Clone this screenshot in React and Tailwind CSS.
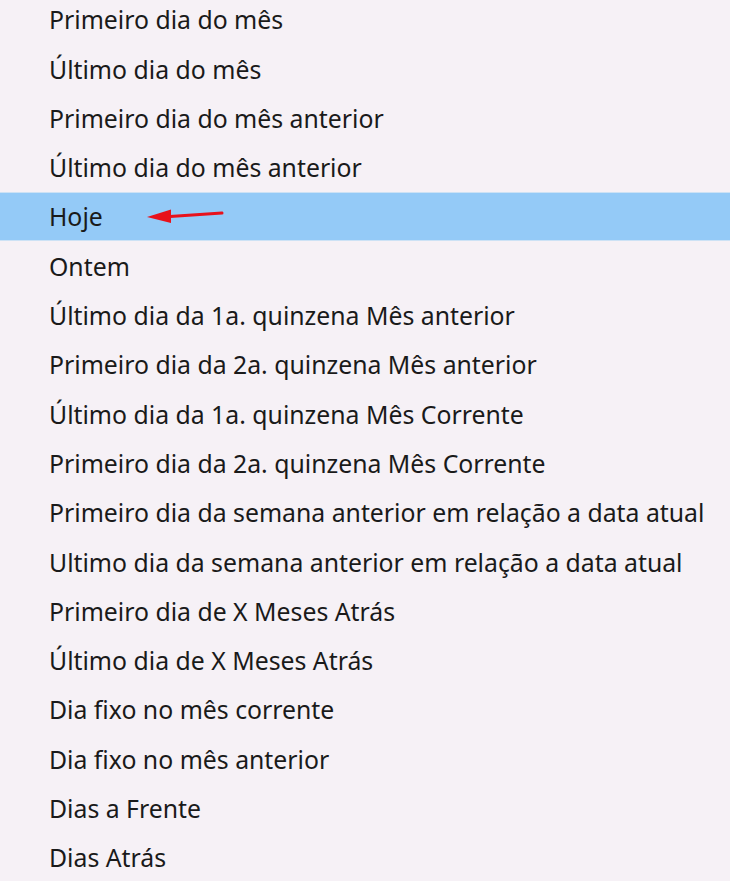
const items = [
  "Primeiro dia do mês",
  "Último dia do mês",
  "Primeiro dia do mês anterior",
  "Último dia do mês anterior",
  "Hoje",
  "Ontem",
  "Último dia da 1a. quinzena Mês anterior",
  "Primeiro dia da 2a. quinzena Mês anterior",
  "Último dia da 1a. quinzena Mês Corrente",
  "Primeiro dia da 2a. quinzena Mês Corrente",
  "Primeiro dia da semana anterior em relação a data atual",
  "Ultimo dia da semana anterior em relação a data atual",
  "Primeiro dia de X Meses Atrás",
  "Último dia de X Meses Atrás",
  "Dia fixo no mês corrente",
  "Dia fixo no mês anterior",
  "Dias a Frente",
  "Dias Atrás",
];

const Arrow = () => (
  <svg className="absolute left-[144px] top-[13px]" width="82" height="20" viewBox="0 0 82 20">
    <path d="M26 10.5 L78 7" stroke="#e8111b" strokeWidth="3" strokeLinecap="round" />
    <path d="M3 11 L27 3.5 L27 17 Z" fill="#e8111b" />
  </svg>
);

export default function App() {
  return (
    <div className="w-[730px] h-[881px] overflow-hidden bg-[#f6f1f6] font-['Noto_Sans',sans-serif] text-[#1a1a1a]">
      <ul className="-mt-[5px]">
        {items.map((label, idx) => (
          <li
            key={idx}
            className={
              idx === 4
                ? "relative h-[49.3px] flex items-center pl-[49px] text-[24.8px] leading-none bg-[#94caf7] border-y border-[#cde2f5]"
                : "relative h-[49.3px] flex items-center pl-[49px] text-[24.8px] leading-none"
            }
          >
            {label}
            {idx === 4 && <Arrow />}
          </li>
        ))}
      </ul>
    </div>
  );
}
